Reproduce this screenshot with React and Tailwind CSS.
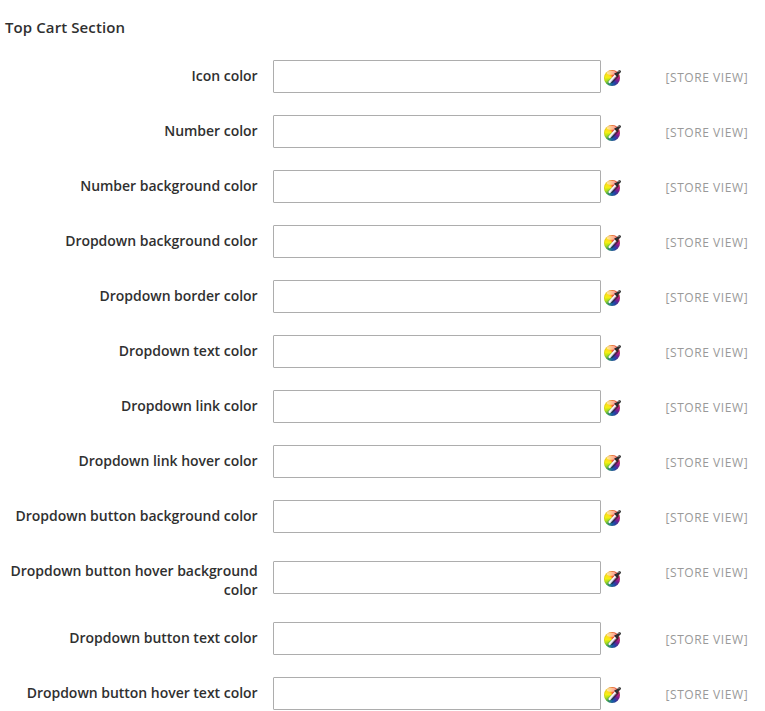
const fields = [
  "Icon color",
  "Number color",
  "Number background color",
  "Dropdown background color",
  "Dropdown border color",
  "Dropdown text color",
  "Dropdown link color",
  "Dropdown link hover color",
  "Dropdown button background color",
  "Dropdown button hover background color",
  "Dropdown button text color",
  "Dropdown button hover text color",
];

function ColorPickerIcon() {
  return (
    <span className="ml-[3px] mt-[3px] block size-4 shrink-0 rounded-full bg-[conic-gradient(#ff7a2c_0deg,#f2402a_35deg,#c5207a_85deg,#7c1a90_115deg,#263fa6_150deg,#1565a8_180deg,#35a55a_215deg,#b5e01c_245deg,#f5f012_275deg,#ffdd1a_310deg,#ff7a2c_360deg)]">
      <svg className="block size-4 overflow-visible" viewBox="0 0 16 16" fill="none">
        <circle cx="8" cy="8" r="7.6" stroke="#5c4a20" strokeOpacity="0.18" strokeWidth="0.8" />
        <ellipse cx="7.4" cy="2.8" rx="4.8" ry="2" fill="#fff" fillOpacity="0.5" />
        <path d="M7.4 12.9 13.6 6.6" stroke="#26222e" strokeWidth="1.8" strokeOpacity="0.65" />
        <path d="M5.6 12.2 11.4 5.6" stroke="#4a4350" strokeWidth="3.2" strokeOpacity="0.3" strokeLinecap="round" />
        <path d="M5.6 12.1 11.4 5.5" stroke="#f8f8fa" strokeWidth="2.3" strokeLinecap="round" />
        <path d="M6.9 11.9 11.6 6.6" stroke="#989ca6" strokeWidth="0.7" />
        <path d="M11.3 3.6 13.7 6" stroke="#2c2c2c" strokeWidth="1.8" strokeLinecap="round" />
        <path d="M12.7 4.3 15.6 1.6" stroke="#303030" strokeWidth="2.8" strokeLinecap="round" />
        <path d="M14.3 1.3 15.8 1" stroke="#8a8a8a" strokeWidth="1" strokeLinecap="round" />
      </svg>
    </span>
  );
}

function Field({ label }) {
  return (
    <div className="flex">
      <label className="w-[257.6px] shrink-0 pt-1.5 pb-px text-right text-sm leading-[19px] font-semibold tracking-[-0.025px] text-[#303030]">
        {label}
      </label>
      <div className="ml-[15.4px] flex items-center">
        <input
          type="text"
          aria-label={label}
          className="h-[33px] w-[328px] rounded-[1px] border border-[#adadad] bg-white px-2.5 outline-none"
        />
        <ColorPickerIcon />
      </div>
      <span className="ml-[45.5px] pt-2.5 text-xs leading-4 tracking-[0.57px] whitespace-nowrap text-[#999]">
        [STORE VIEW]
      </span>
    </div>
  );
}

export default function App() {
  return (
    <main className="h-[711px] w-[765px] overflow-hidden bg-white pt-[17px] font-['Open_Sans',sans-serif]">
      <h4 className="mb-[22px] pl-[5px] text-[15px] leading-[21px] font-semibold tracking-[0.1px] text-[#303030]">
        Top Cart Section
      </h4>
      <div className="flex flex-col gap-[22px]">
        {fields.map((label) => (
          <Field key={label} label={label} />
        ))}
      </div>
    </main>
  );
}
